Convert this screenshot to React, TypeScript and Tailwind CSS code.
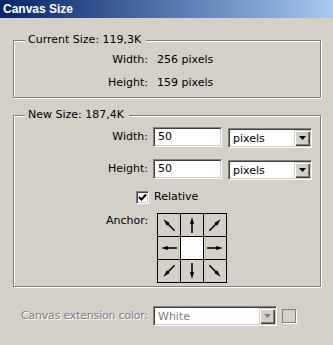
import React from "react"

const font = "font-['DejaVu_Sans',Verdana,sans-serif]"

/**
 * Etched frame with a caption sitting on its top edge
 */
function GroupBox({
  title,
  className,
  children,
}: {
  title: string
  className: string
  children: React.ReactNode
}) {
  return (
    <div
      className={`relative mx-[13px] w-[308px] border border-[#808080] shadow-[inset_1px_1px_0_#fff,1px_1px_0_#fff] ${className}`}
    >
      <span className="absolute -top-[9px] left-[11px] bg-[#d4d0c8] pl-[3px] pr-[5px] leading-4">
        {title}
      </span>
      {children}
    </div>
  )
}

function Sunken({className, children}: {className: string; children?: React.ReactNode}) {
  return (
    <div
      className={`border border-t-[#808080] border-l-[#808080] border-r-white border-b-white bg-white shadow-[inset_1px_1px_0_#404040,inset_-1px_-1px_0_#d4d0c8] ${className}`}
    >
      {children}
    </div>
  )
}

function Dropdown({value, disabled}: {value: string; disabled?: boolean}) {
  return (
    <Sunken className="flex h-5 w-full p-px">
      <span
        className={`flex-1 pl-[3px] pt-px leading-4 ${disabled ? "text-[#808080]" : "text-black"}`}
      >
        {value}
      </span>
      <span className="flex h-4 w-4 items-center justify-center bg-[#d4d0c8] shadow-[inset_1px_1px_0_#d4d0c8,inset_2px_2px_0_#fff,inset_-1px_-1px_0_#404040,inset_-2px_-2px_0_#808080]">
        <svg width="7" height="4" viewBox="0 0 7 4">
          <polygon points="0,0 7,0 3.5,4" fill={disabled ? "#808080" : "#000"} />
        </svg>
      </span>
    </Sunken>
  )
}

/**
 * One anchor cell arrow, drawn pointing up and rotated into place
 */
function Arrow({angle}: {angle: number}) {
  return (
    <svg width="22" height="22" viewBox="0 0 22 22">
      <g transform={`rotate(${angle} 11 11)`}>
        <line x1="11" y1="19" x2="11" y2="8" stroke="#000" strokeWidth="1.5" />
        <polygon points="11,3 9,10 13,10" fill="#000" />
      </g>
    </svg>
  )
}

const anchorAngles = [-45, 0, 45, -90, null, 90, -135, 180, 135]

export default function App() {
  return (
    <div className={`h-[345px] w-[333px] overflow-hidden bg-[#d4d0c8] text-[11px] text-black ${font}`}>
      <div className="flex h-[18px] items-center bg-gradient-to-r from-[#0a246a] to-[#a6caf0] pl-[3px]">
        <span className="font-['Liberation_Sans',Arial,sans-serif] text-[12px] font-bold leading-4 text-white">
          Canvas Size
        </span>
      </div>

      <GroupBox title="Current Size: 119,3K" className="mt-[22px] h-[58px]">
        <div className="grid grid-cols-[134px_1fr] gap-x-[9px] gap-y-[7px] pt-[11px] leading-4">
          <span className="text-right">Width:</span>
          <span>256 pixels</span>
          <span className="text-right">Height:</span>
          <span>159 pixels</span>
        </div>
      </GroupBox>

      <GroupBox title="New Size: 187,4K" className="mt-[17px] h-[172px]">
        <div className="flex flex-col pt-[10px]">
          {["Width:", "Height:"].map((label, i) => (
            <div key={label} className={`flex items-center ${i ? "mt-[10px]" : ""}`}>
              <span className="w-[134px] text-right leading-4">{label}</span>
              <Sunken className="ml-[5px] h-5 w-[69px] pl-[4px] pt-[1px] leading-4">50</Sunken>
              <div className="ml-[6px] mt-[2px] w-[84px]">
                <Dropdown value="pixels" />
              </div>
            </div>
          ))}
          <div className="mt-[9px] flex items-center pl-[122px]">
            <Sunken className="flex h-[13px] w-[13px] items-center justify-center">
              <svg width="9" height="9" viewBox="0 0 9 9">
                <polyline points="1,4 3.5,6.5 8,1.5" fill="none" stroke="#000" strokeWidth="2" />
              </svg>
            </Sunken>
            <span className="ml-[5px] leading-4">Relative</span>
          </div>
          <div className="mt-[8px] flex pl-[92px]">
            <span className="leading-4">Anchor:</span>
            <div className="ml-[9px] grid grid-cols-[repeat(3,22px)] gap-px bg-black p-px">
              {anchorAngles.map((a, i) => (
                <div
                  key={i}
                  className={`h-[22px] w-[22px] ${a === null ? "bg-white" : "bg-[#d4d0c8]"}`}
                >
                  {a !== null && <Arrow angle={a} />}
                </div>
              ))}
            </div>
          </div>
        </div>
      </GroupBox>

      <div className="mt-[19px] flex items-center pl-[21px]">
        <span className="w-[132px] whitespace-nowrap leading-4 tracking-[-0.2px] text-[#808080] [text-shadow:1px_1px_0_#fff]">
          Canvas extension color:
        </span>
        <div className="w-[124px]">
          <Dropdown value="White" disabled />
        </div>
        <div className="ml-[5px] h-[14px] w-[14px] border border-[#808080] shadow-[1px_1px_0_#fff]" />
      </div>
    </div>
  )
}
